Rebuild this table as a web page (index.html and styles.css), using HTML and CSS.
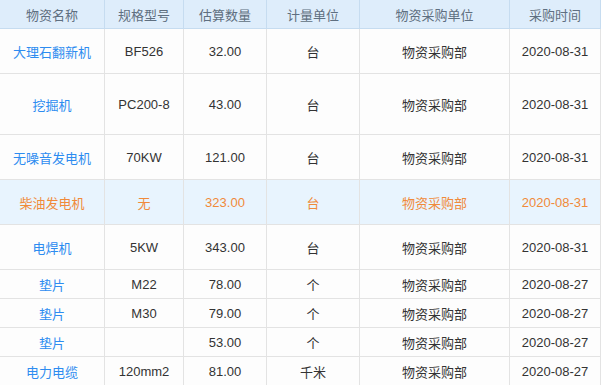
FILE: index.html
```html
<!DOCTYPE html>
<html lang="zh-CN">
<head>
<meta charset="utf-8">
<link rel="stylesheet" href="styles.css">
</head>
<body>
<div class="grid">
  <div class="row head">
    <div class="cell">物资名称</div><div class="cell">规格型号</div><div class="cell">估算数量</div><div class="cell">计量单位</div><div class="cell">物资采购单位</div><div class="cell">采购时间</div>
  </div>
  <div class="row tall">
    <div class="cell name">大理石翻新机</div><div class="cell">BF526</div><div class="cell">32.00</div><div class="cell">台</div><div class="cell">物资采购部</div><div class="cell">2020-08-31</div>
  </div>
  <div class="row taller">
    <div class="cell name">挖掘机</div><div class="cell">PC200-8</div><div class="cell">43.00</div><div class="cell">台</div><div class="cell">物资采购部</div><div class="cell">2020-08-31</div>
  </div>
  <div class="row tall">
    <div class="cell name">无噪音发电机</div><div class="cell">70KW</div><div class="cell">121.00</div><div class="cell">台</div><div class="cell">物资采购部</div><div class="cell">2020-08-31</div>
  </div>
  <div class="row tall active">
    <div class="cell name">柴油发电机</div><div class="cell">无</div><div class="cell">323.00</div><div class="cell">台</div><div class="cell">物资采购部</div><div class="cell">2020-08-31</div>
  </div>
  <div class="row tall">
    <div class="cell name">电焊机</div><div class="cell">5KW</div><div class="cell">343.00</div><div class="cell">台</div><div class="cell">物资采购部</div><div class="cell">2020-08-31</div>
  </div>
  <div class="row">
    <div class="cell name">垫片</div><div class="cell">M22</div><div class="cell">78.00</div><div class="cell">个</div><div class="cell">物资采购部</div><div class="cell">2020-08-27</div>
  </div>
  <div class="row">
    <div class="cell name">垫片</div><div class="cell">M30</div><div class="cell">79.00</div><div class="cell">个</div><div class="cell">物资采购部</div><div class="cell">2020-08-27</div>
  </div>
  <div class="row">
    <div class="cell name">垫片</div><div class="cell"></div><div class="cell">53.00</div><div class="cell">个</div><div class="cell">物资采购部</div><div class="cell">2020-08-27</div>
  </div>
  <div class="row">
    <div class="cell name">电力电缆</div><div class="cell">120mm2</div><div class="cell">81.00</div><div class="cell">千米</div><div class="cell">物资采购部</div><div class="cell">2020-08-27</div>
  </div>
</div>
</body>
</html>
```
FILE: styles.css
```css
html, body {
  margin: 0;
  padding: 0;
  background: #fdfdfd;
}
body {
  font-family: "Liberation Sans", "Noto Sans CJK SC", sans-serif;
  font-size: 13px;
  color: #333;
}
.grid {
  width: 601px;
}
.row {
  display: grid;
  grid-template-columns: 105px 79px 83px 93px 150px 91px;
  height: 29px;
  background: #fdfdfd;
}
.cell {
  box-sizing: border-box;
  border-right: 1px solid #e3e3e3;
  border-bottom: 1px solid #e3e3e3;
  display: flex;
  align-items: center;
  justify-content: center;
  white-space: nowrap;
  overflow: hidden;
}
.head {
  background: #deedfb;
  color: #5f6f80;
}
.head .cell {
  border-right-color: #c6dcf0;
  border-bottom-color: #c6dcf0;
}
.tall { height: 45px; }
.taller { height: 61px; }
.name { color: #2d8cf0; }
.active {
  background: #e8f4fe;
}
.active .cell {
  color: #f08a3a;
}
```
